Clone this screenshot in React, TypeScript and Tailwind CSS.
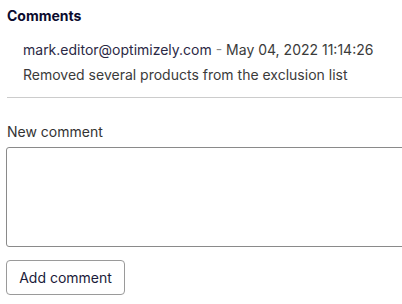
export default function App() {
  return (
    <div className="min-h-screen w-[402px] overflow-hidden bg-white pl-[7px] pt-[7px] font-['Inter',sans-serif]">
      <h2 className="text-[14px] font-bold leading-[18px] text-[#0b0b2e]">Comments</h2>
      <div className="mt-[12px] pl-4 text-[14px] leading-[25px] text-[#3b3b3b]">
        <p>
          <span className="text-[#2b2945]">mark.editor@optimizely.com</span>{" "}
          <span className="text-[#8a8a8a]">-</span> May 04, 2022 11:14:26
        </p>
        <p>Removed several products from the exclusion list</p>
      </div>
      <hr className="mt-[10px] border-t border-[#cccccc]" />
      <label className="mt-[25px] block text-[14px] leading-[18px] text-[#333333]">New comment</label>
      <textarea className="mt-[6px] -ml-px block h-[100px] w-[420px] resize-none rounded-[3px] border border-[#8a8a8a] bg-white" />
      <button className="mt-[13px] -ml-px h-[35px] w-[119px] rounded-[4px] border border-[#9a9a9a] bg-white text-[14px] text-[#1b1b3a]">
        Add comment
      </button>
    </div>
  );
}
